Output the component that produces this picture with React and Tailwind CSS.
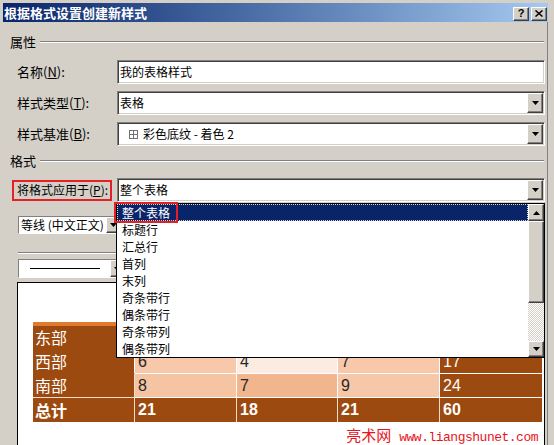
import React from "react";

const raised =
  "bg-[#d4d0c8] border border-t-white border-l-white border-r-[#404040] border-b-[#404040] shadow-[inset_-1px_-1px_0_#808080] flex items-center justify-center";
const sunken =
  "bg-white border border-t-[#808080] border-l-[#808080] border-r-white border-b-white shadow-[inset_1px_1px_0_#404040,inset_-1px_-1px_0_#d4d0c8]";

function Tri({ up }) {
  return (
    <svg width="7" height="4" viewBox="0 0 7 4">
      <path d={up ? "M3.5 0L7 4H0z" : "M0 0h7L3.5 4z"} fill="black" />
    </svg>
  );
}

function Etched({ className = "" }) {
  return <div className={"h-[2px] border-t border-b border-t-[#808080] border-b-white " + className} />;
}

function GroupHeader({ children, className = "" }) {
  return (
    <div className={"flex items-center h-[17px] " + className}>
      <span className="text-[13px] leading-[17px]">{children}</span>
      <Etched className="flex-1 ml-[4px] mr-[3px]" />
    </div>
  );
}

function Label({ text, acc, red }) {
  return (
    <div
      className={
        "w-[100px] flex items-center whitespace-nowrap " +
        (red ? "h-[21px] border-2 border-[#e61e25] pl-[3px] text-[12px]" : "h-[21px] pl-[5px] text-[13px]")
      }
    >
      {text}(<span className="underline">{acc}</span>):
    </div>
  );
}

function Field({ children, combo }) {
  return (
    <div className={"ml-[5px] w-[428px] h-[24px] p-[1px] flex " + sunken}>
      <div className="flex-1 flex items-center pl-[1px] text-[12px] leading-[20px]">{children}</div>
      {combo && (
        <div className={"w-[16px] h-[20px] " + raised}>
          <Tri />
        </div>
      )}
    </div>
  );
}

const brown = "bg-[#9c4a0f]";

function Cell({ children, bg, first, last, bold, lastRow, cream }) {
  const base = "h-[23px] leading-[23px] text-[16px] whitespace-nowrap overflow-hidden ";
  const borderR = last ? "" : cream ? "border-r border-r-[#f6dcc7] " : "border-r border-r-white ";
  const borderB = lastRow ? "" : "border-b " + (cream ? "border-b-[#f6dcc7] " : first ? "border-b-[#9c4a0f] " : "border-b-white ");
  const font = first
    ? "font-['Noto_Sans_CJK_SC',sans-serif] pl-[2px] text-white "
    : "font-['Liberation_Sans',sans-serif] pl-[3px] " + (bg === brown ? "text-white " : "text-[#262626] ");
  return (
    <div className={base + borderR + borderB + font + bg + (bold ? " font-bold" : "") + (lastRow ? " h-[24px] leading-[24px]" : " box-content")}>
      {children}
    </div>
  );
}

export default function App() {
  const items = ["整个表格", "标题行", "汇总行", "首列", "末列", "奇条带行", "偶条带行", "奇条带列", "偶条带列"];
  return (
    <div className="relative w-[554px] h-[445px] overflow-hidden bg-[#d4d0c8] text-black font-['Noto_Sans_CJK_SC','Noto_Sans',sans-serif]">
      {/* Title bar */}
      <div className="ml-[3px] mt-[3px] w-[545px] h-[19px] flex items-center justify-between bg-gradient-to-r from-[#0a246a] to-[#a6caf0]">
        <span className="pl-[1px] text-[13px] font-bold text-white leading-[19px]">根据格式设置创建新样式</span>
        <div className="flex gap-[2px] mr-[1px] mt-[2px]">
          <div className={"w-[16px] h-[14px] text-[11px] font-bold leading-none font-['Liberation_Sans',sans-serif] " + raised}>?</div>
          <div className={"w-[16px] h-[14px] " + raised}>
            <svg width="8" height="7" viewBox="0 0 8 7">
              <path d="M0.5 0.5L7.5 6.5M7.5 0.5L0.5 6.5" stroke="black" strokeWidth="1.5" />
            </svg>
          </div>
        </div>
      </div>

      <div className="flex">
        <div className="w-[547px] pl-[10px]">
          <GroupHeader className="mt-[11px]">属性</GroupHeader>

          <div className="flex items-center ml-[2px] mt-[10px]">
            <Label text="名称" acc="N" />
            <Field>我的表格样式</Field>
          </div>
          <div className="flex items-center ml-[2px] mt-[7px]">
            <Label text="样式类型" acc="T" />
            <Field combo>表格</Field>
          </div>
          <div className="flex items-center ml-[2px] mt-[7px]">
            <Label text="样式基准" acc="B" />
            <Field combo>
              <span className="ml-[9px] mr-[5px] flex">
                <svg width="9" height="9" viewBox="0 0 9 9">
                  <rect x="0.5" y="0.5" width="8" height="8" fill="none" stroke="#707070" />
                  <path d="M4.5 0.5V8.5M0.5 4.5H8.5" stroke="#707070" />
                </svg>
              </span>
              彩色底纹 - 着色 2
            </Field>
          </div>

          <GroupHeader className="mt-[6px]">格式</GroupHeader>

          <div className="flex items-center ml-[2px] mt-[9px]">
            <Label text="将格式应用于" acc="P" red />
            <Field combo>整个表格</Field>
          </div>

          {/* font combo */}
          <div className={"ml-[8px] mt-[14px] w-[104px] h-[18px] flex items-center bg-white border border-t-[#808080] border-l-[#808080] border-r-white border-b-white"}>
            <span className="flex-1 pl-[2px] text-[12px] leading-[16px] whitespace-nowrap">等线 (中文正文)</span>
            <div className={"w-[15px] h-[16px] " + raised}>
              <Tri />
            </div>
          </div>

          <Etched className="ml-[8px] mt-[18px] w-[120px]" />

          {/* line style combo */}
          <div className={"ml-[8px] mt-[5px] w-[108px] h-[19px] flex items-center bg-white border border-t-[#808080] border-l-[#808080] border-r-white border-b-white"}>
            <div className="flex-1 flex items-center pl-[11px]">
              <div className="w-[70px] h-px bg-black" />
            </div>
            <div className={"w-[15px] h-[17px] " + raised}>
              <Tri />
            </div>
          </div>

          {/* preview */}
          <div className="ml-[7px] mt-[4px] w-[528px] h-[200px] bg-white border border-black pt-[16px] pl-[15px]">
            <div className="grid grid-cols-[102px_102px_101px_102px_102px] w-[509px]">
              <div className="col-span-5 h-[23px] border-b-4 border-b-[#e27a2e] box-content" />
              <Cell first bg={brown}>东部</Cell>
              <Cell bg="bg-[#f7c8a9]"></Cell>
              <Cell bg="bg-[#fbebe0]"></Cell>
              <Cell bg="bg-[#f7c9aa]"></Cell>
              <Cell last bg={brown}></Cell>

              <Cell first bg={brown}>西部</Cell>
              <Cell bg="bg-[#f7c8a9]">6</Cell>
              <Cell bg="bg-[#fbebe0]">4</Cell>
              <Cell bg="bg-[#f7c9aa]">7</Cell>
              <Cell last bg={brown}>17</Cell>

              <Cell first cream bg={brown}>南部</Cell>
              <Cell bg="bg-[#f5c4a3]" >8</Cell>
              <Cell bg="bg-[#f2b68f]">7</Cell>
              <Cell bg="bg-[#f6c8a9]">9</Cell>
              <Cell last bg={brown}>24</Cell>

              <Cell first cream lastRow bold bg={brown}>总计</Cell>
              <Cell cream lastRow bold bg={brown}>21</Cell>
              <Cell cream lastRow bold bg={brown}>18</Cell>
              <Cell cream lastRow bold bg={brown}>21</Cell>
              <Cell last lastRow bold bg={brown}>60</Cell>
            </div>
            <div className="flex justify-end items-baseline pr-[6px] mt-[4px] text-[#e8141c] whitespace-nowrap">
              <span className="text-[15px] leading-[18px]">亮术网</span>
              <span className="ml-[8px] text-[13px] tracking-[-0.5px] font-['Liberation_Mono',monospace]">www.liangshunet.com</span>
            </div>
          </div>
        </div>
        <div className="w-px h-[430px] bg-[#808080]" />
      </div>

      {/* dropdown list overlay */}
      <div className="absolute left-[116px] top-[203px] w-[429px] h-[155px] border border-black bg-white flex">
        <div className="flex-1 flex flex-col">
          {items.map((it, i) => (
            <div
              key={it}
              className={
                "h-[17px] pl-[4px] text-[12px] leading-[15px] whitespace-nowrap " +
                (i === 0 ? "bg-[#0a246a] text-white border border-dotted border-[#d8d8c0]" : "border border-transparent")
              }
            >
              {it}
            </div>
          ))}
        </div>
        <div className="w-[16px] flex flex-col">
          <div className={"h-[17px] " + raised}>
            <Tri up />
          </div>
          <div className={"h-[82px] " + raised} />
          <div className="flex-1 bg-[image:repeating-conic-gradient(#ffffff_0_25%,#d4d0c8_0_50%)] bg-size-[2px_2px]" />
          <div className={"h-[16px] " + raised}>
            <Tri />
          </div>
        </div>
      </div>

      {/* red annotation around highlighted item */}
      <div className="absolute left-[114px] top-[202px] w-[64px] h-[21px] border-2 border-[#e61e25]" />
    </div>
  );
}
